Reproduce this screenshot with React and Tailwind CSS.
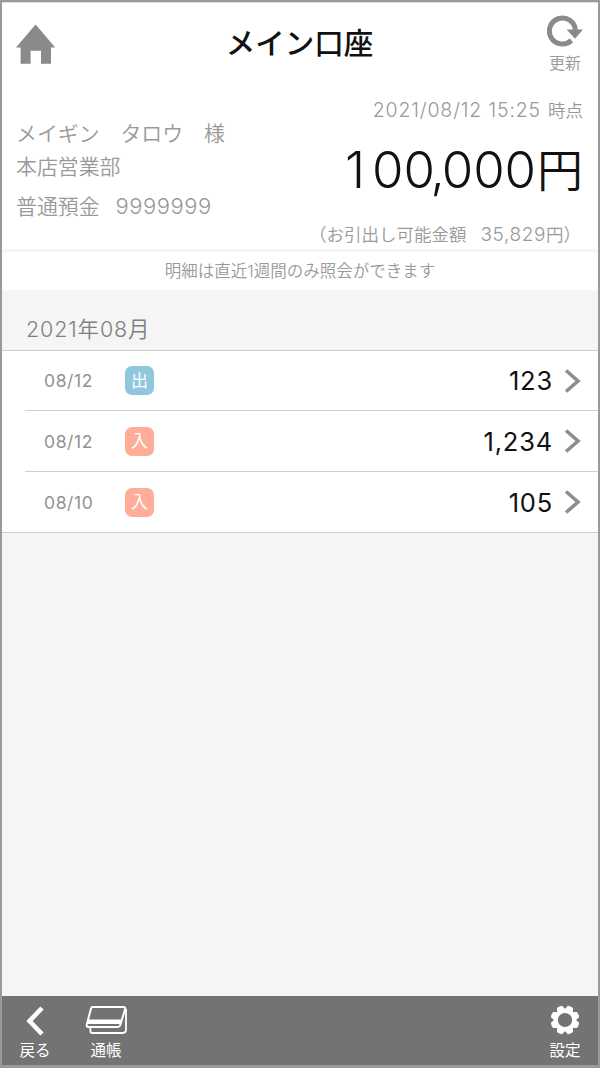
import clsx from 'clsx'

const transactions = [
  { id: 1, date: '08/12', type: 'out', amount: '123' },
  { id: 2, date: '08/12', type: 'in', amount: '1,234' },
  { id: 3, date: '08/10', type: 'in', amount: '105' },
]

function HomeIcon() {
  return (
    <svg width="40" height="41" viewBox="0 0 40 41" fill="#8a8a8a">
      <path d="M19.6 0.5 39.2 23.5H35V39.8H25V26.8H14.6V39.8H4.6V23.5H0Z" />
    </svg>
  )
}

function ReloadIcon() {
  return (
    <svg width="36" height="32" viewBox="0 0 36 32">
      <path d="M24.4 25.4A13 13 0 1 1 28.4 15.8" fill="none" stroke="#8a8a8a" strokeWidth="5" />
      <path d="M19.6 14.6H36L28 23.8Z" fill="#8a8a8a" />
    </svg>
  )
}

function PassbookIcon() {
  return (
    <svg width="43" height="30" viewBox="0 0 43 30" fill="none" stroke="#fff" strokeWidth="2" strokeLinejoin="round">
      <path d="M7.6 2H38.2Q40.8 2 40 4.4L35.2 20.2Q34.6 22 32.6 22H3.6Q1 22 1.8 19.6L6 3.4Q6.4 2 7.6 2Z" />
      <path d="M3.2 14.5H37L35.6 19H2.2Z" fill="#fff" stroke="none" />
      <path d="M5.4 22V26Q5.4 28 7.4 28H37.6Q40.8 28 41 25V4" strokeWidth="1.8" />
    </svg>
  )
}

function GearIcon() {
  return (
    <svg width="30" height="30" viewBox="-15 -15 30 30">
      <g fill="#fff">
        {[22.5, 67.5, 112.5, 157.5, 202.5, 247.5, 292.5, 337.5].map((angle) => (
          <path key={angle} d="M-4.6 -9 -2.9 -14.1Q0 -15 2.9 -14.1L4.6 -9Z" transform={`rotate(${angle})`} />
        ))}
      </g>
      <circle r="9.2" fill="none" stroke="#fff" strokeWidth="4.2" />
    </svg>
  )
}

function TransactionRow({ item }) {
  return (
    <li className="group flex pl-[23px]">
      <div className="flex h-[61px] flex-1 items-center border-b border-[#cfcfcf] pr-[17px] pl-[19px] group-first:h-[60px] group-last:h-[60px] group-last:border-b-0">
        <span className="w-[81px] pt-[2px] text-[17.5px] tracking-[0.6px] text-[#929292]">{item.date}</span>
        <span
          className={clsx(
            'flex size-[29px] items-center justify-center rounded-[7px] pt-px text-[17px] leading-none text-white',
            item.type === 'out' ? 'bg-[#91c6df]' : 'bg-[#ffac98]',
          )}
        >
          {item.type === 'out' ? '出' : '入'}
        </span>
        <span className="ml-auto pt-[2px] text-[25.5px] font-[370] tracking-[0.8px] text-[#111]">{item.amount}</span>
        <svg className="ml-[11px]" width="17" height="24" viewBox="0 0 17 24" fill="none" stroke="#8e8e8e" strokeWidth="3.6">
          <path d="M2 1.5 14 12 2 22.5" />
        </svg>
      </div>
    </li>
  )
}

export default function App() {
  return (
    <div className="flex h-[1068px] w-[600px] flex-col border-2 border-b-3 border-[#999] bg-white font-[Inter,'Noto_Sans_CJK_JP',sans-serif] whitespace-nowrap text-[#999]">
      <header className="flex h-[88px] justify-between border-t border-[#ddd] pr-[15px] pl-[14px]">
        <div className="w-[60px] pt-[21px]">
          <HomeIcon />
        </div>
        <h1 className="pt-[18px] text-[29.5px] leading-[44px] font-medium text-[#111]">メイン口座</h1>
        <div className="flex w-[60px] flex-col items-end pt-[12px]">
          <ReloadIcon />
          <span className="mt-[4px] mr-[2px] text-[16px] leading-6 font-[350]">更新</span>
        </div>
      </header>

      <section className="flex h-[162px] justify-between border-b-3 border-[#f5f5f5] pr-[14px] pl-[14px] font-[350]">
        <div className="pt-[28px] text-[20.9px] leading-8">
          <p>メイギン　タロウ　様</p>
          <p className="mt-[1px]">本店営業部</p>
          <p className="mt-[7px]">
            普通預金<span className="ml-4 text-[22px] tracking-[0.5px]">9999999</span>
          </p>
        </div>
        <div className="flex flex-col items-end">
          <p className="mr-px pt-[8px] text-[17.5px] leading-6">
            <span className="text-[19.5px] tracking-[0.85px]">2021/08/12 15:25</span>
            <span className="ml-[7px]">時点</span>
          </p>
          <p className="mt-[17px] mr-px flex items-center leading-[60px] text-[#111]">
            <span className="text-[51px] font-light tracking-[-0.1px]">
              <span className="mr-[7px]">1</span>0<span className="tracking-[-3.1px]">0,</span>000
            </span>
            <span className="ml-px text-[46px] font-[350]">円</span>
          </p>
          <p className="mt-[23px] mr-[3px] text-[17.5px] leading-6">
            （お引出し可能金額<span className="ml-3.5 text-[19px] tracking-[0.6px]">35,829</span>円）
          </p>
        </div>
      </section>

      <p className="h-[38px] text-center text-[16.5px] leading-[38px] font-[350]">明細は直近1週間のみ照会ができます</p>

      <main className="flex-1 bg-[#f5f5f5]">
        <h2 className="h-[60px] pt-[23px] pl-[24px] text-[21.5px] leading-8 font-[350] tracking-[0.85px] text-[#808080]">
          2021年08月
        </h2>
        <ul className="border-y border-[#cfcfcf] bg-white">
          {transactions.map((item) => (
            <TransactionRow key={item.id} item={item} />
          ))}
        </ul>
      </main>

      <footer className="flex h-[69px] bg-[#737373] text-[15.5px] leading-6 text-white">
        <button className="flex w-[66px] flex-col items-center pt-[10px]">
          <svg width="18" height="30" viewBox="0 0 18 30" fill="none" stroke="#fff" strokeWidth="4.6">
            <path d="M16 2 3.5 15 16 28" />
          </svg>
          <span className="mt-[3px]">戻る</span>
        </button>
        <button className="ml-[6px] flex w-[64px] flex-col items-center pt-[9px]">
          <PassbookIcon />
          <span className="mt-[4px]">通帳</span>
        </button>
        <button className="ml-auto flex w-[66px] flex-col items-center pt-[9px]">
          <GearIcon />
          <span className="mt-[4px]">設定</span>
        </button>
      </footer>
    </div>
  )
}
